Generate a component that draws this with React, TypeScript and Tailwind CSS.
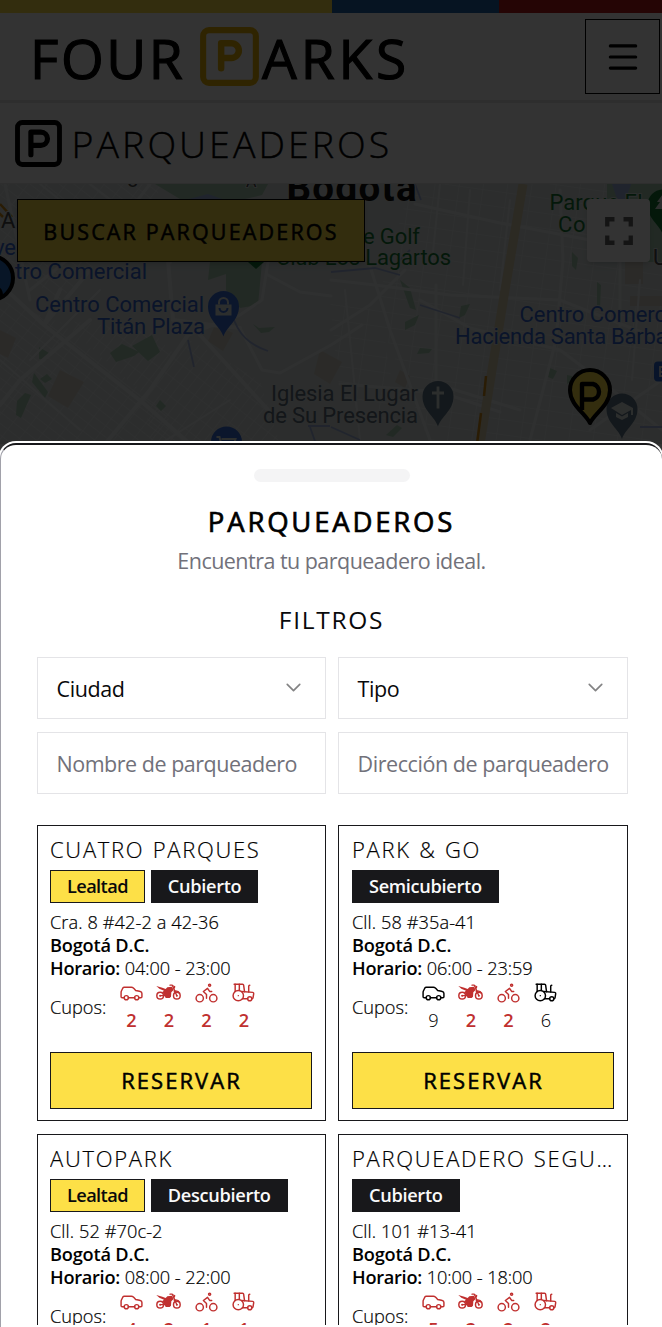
import type { ReactNode } from "react";
import { Bike, Car, ChevronDown, Menu, Tractor } from "lucide-react";

type Lot = {
  name: string;
  loyalty: boolean;
  kind: string;
  address: string;
  hours: string;
  spots: number[];
};

const LOTS: Lot[] = [
  { name: "CUATRO PARQUES", loyalty: true, kind: "Cubierto", address: "Cra. 8 #42-2 a 42-36", hours: "04:00 - 23:00", spots: [2, 2, 2, 2] },
  { name: "PARK & GO", loyalty: false, kind: "Semicubierto", address: "Cll. 58 #35a-41", hours: "06:00 - 23:59", spots: [9, 2, 2, 6] },
  { name: "AUTOPARK", loyalty: true, kind: "Descubierto", address: "Cll. 52 #70c-2", hours: "08:00 - 22:00", spots: [4, 2, 1, 1] },
  { name: "PARQUEADERO SEGU…", loyalty: false, kind: "Cubierto", address: "Cll. 101 #13-41", hours: "10:00 - 18:00", spots: [5, 3, 2, 2] },
];

function ParkingLogo({ className, d }: { className: string; d: string }) {
  return (
    <svg viewBox="0 0 60 60" className={className} fill="none" stroke="currentColor" strokeLinejoin="round" strokeLinecap="round">
      <rect x="3.2" y="3.2" width="53.6" height="53.6" rx="6" strokeWidth="6.2" />
      <path d={d} strokeWidth="6.6" />
    </svg>
  );
}

function Motorcycle() {
  return (
    <svg viewBox="0 -13 75 75" className="size-[25px]" fill="none" stroke="currentColor">
      <circle cx="12.500" cy="34" r="10" strokeWidth="4.400" />
      <circle cx="62.500" cy="34" r="10" strokeWidth="4.400" />
      <circle cx="12.500" cy="34" r="3" fill="currentColor" stroke="none" />
      <circle cx="62.500" cy="34" r="3" fill="currentColor" stroke="none" />
      <path d="M42 2.500H49L62.500 34M12.500 34H28" strokeWidth="4" strokeLinecap="round" strokeLinejoin="round" />
      <path d="M1 5L19 10L29 14L34 9L48 7L53 17L46 24L45 37L41 41H29L26 34L19 23L24 19L10 13Z" fill="currentColor" stroke="none" />
      <path d="M51 3L58 6L57 12L54 13ZM52 19Q66 14 74 27L62 22L55 25Z" fill="currentColor" stroke="none" />
    </svg>
  );
}

function Pin({ x, y, color, children }: { x: number; y: number; color: string; children: ReactNode }) {
  return (
    <g transform={`translate(${x} ${y})`}>
      <path d="M0 30C-3 20-15.500 14-15.500 0a15.500 15.500 0 1 1 31 0C15.500 14 3 20 0 30Z" fill={color} />
      {children}
    </g>
  );
}

function CityMap() {
  return (
    <svg viewBox="0 184 662 260" className="block h-[260px] w-full font-['Roboto',sans-serif]">
      <rect y="184" width="662" height="260" fill="#d9e0df" />
      <defs>
        <pattern id="blocksA" width="15" height="9" patternUnits="userSpaceOnUse" patternTransform="rotate(38)">
          <path d="M0 0H15M0 0V9" stroke="#ebeeef" strokeWidth="1.400" fill="none" />
        </pattern>
        <pattern id="blocksB" width="24" height="15" patternUnits="userSpaceOnUse" patternTransform="rotate(8)">
          <path d="M0 0H24M0 0V15" stroke="#eaeeef" strokeWidth="1.500" fill="none" />
        </pattern>
        <pattern id="blocksC" width="16" height="9" patternUnits="userSpaceOnUse" patternTransform="rotate(-52)">
          <path d="M0 0H16M0 0V9" stroke="#ebeeef" strokeWidth="1.400" fill="none" />
        </pattern>
      </defs>
      <path d="M0 300L60 322L150 398L190 442H0ZM0 184H165L120 240L60 300L0 260Z" fill="url(#blocksA)" />
      <path d="M190 340L260 380L280 444H150L145 400ZM60 320L150 330L180 360L150 400Z" fill="url(#blocksC)" />
      <path d="M410 184H662V444H430L375 310ZM330 300L380 310L400 430L340 400Z" fill="url(#blocksB)" />
      <g fill="#d8d2c7">
        <path d="M180 225h60v30h-60zM215 325l18 8-10 18-15-10zM60 370l24 12-16 26-20-12zM320 350l22 12-12 22-16-10zM0 330l16 8-8 20-8-4zM625 262h18v22h-18zM630 296h32v10h-32zM400 370l10 6-5 12-10-6z" />
      </g>
      <g fill="#a9cdb3">
        <path d="M155 184H268L262 195L245 199H180ZM607 184H662V262H607ZM210 262H262L258 305L240 308L226 290V274L208 280ZM110 353l12-9 17 8-5 4-18 6zM132 346l20-11 8 17-12 9zM39 347l10 6-2 7-8-1zM34 373l14 19-3 6-13-16zM47 374l5 5-7 4-5-4zM17 401l8-8 6 2-10 23-5-3zM160 400l6 6-5 5-5-5zM253 324l6 4 16-1-6 5-8 1zM405 322l14-7-4 10-10 5zM461 306l9-2-5 11-6 3zM420 348l12 1-3 4-12 1zM550 368l7 3-4 8-5-2zM567 375l5 1v6l-5 2zM386 435l11-10 5 3-9 9zM400 280l10 8 6 22-6-2zM572 252l6 6-2 12-4-4zM597 282l4 3-1 22-3-2z" />
      </g>
      <g fill="none" stroke="#ebeff0" strokeLinecap="round" strokeLinejoin="round">
        <path d="M0 284L44 325L142 402L190 444M44 325L90 270M0 405L20 380L90 320M44 325L60 290M105 444L150 390L188 335L212 325L240 328M200 335L270 412M168 260L173 320L212 325M150 240L170 262" strokeWidth="4" />
        <path d="M268 262L262 300L240 315L212 325M268 275L300 292L331 296M240 328L262 370L280 373L331 345L362 325M365 250L390 330L430 440M331 280L375 285L450 295L560 300L662 340M415 204L500 223L590 240M436 285V384L520 410M560 190L563 260L556 340L530 440M331 330L370 305L405 270M420 300L470 328L560 350L600 380L662 430M340 384L440 392L500 412M590 430L662 380M150 184L130 210L30 290M30 300L5 184M620 262V340" strokeWidth="3" />
        <path d="M90 184L170 245M40 184L110 240M100 290L30 360M0 360L80 430M230 400L160 444M440 184L432 262M470 190L463 285M510 200L500 290M640 280L632 380M345 290L360 440" strokeWidth="2" />
      </g>
      <path d="M523 184L505 290L480 444" fill="none" stroke="#dccfae" strokeWidth="9" />
      <path d="M486 376L484 396M481 413L477 444M0 204L12 217M-2 212L3 217" fill="none" stroke="#cf8a17" strokeWidth="2.500" />
      <g fill="none" stroke="#a3b6e0" strokeWidth="1.800">
        <path d="M232 314C238 335 250 345 268 351M188 340L194 367M415 184L421 200M410 250L395 265M331 272L375 268L400 275M420 305L460 318M640 427H662M308 426H330M310 427L316 444M331 427L360 440" />
      </g>
      <path d="M185 200L208 194L228 201L208 210ZM612 184l20-2-6 16-8 4z" fill="#9fb4e2" />

      <g fontSize="22" strokeLinejoin="round" strokeWidth="2" stroke="#dde3e2" paintOrder="stroke">
        <text x="286.500" y="201" fontSize="38.500" fontWeight="700" fill="#111111" textLength="130">Bogotá</text>
        <g fill="#3366d1">
          <text x="-6" y="255" textLength="22">ve</text>
          <text x="15" y="279" textLength="132">tro Comercial</text>
          <text x="35" y="311.500" textLength="169">Centro Comercial</text>
          <text x="97" y="333.500" textLength="108">Titán Plaza</text>
          <text x="519.500" y="322" textLength="169">Centro Comercial</text>
          <text x="455" y="344" textLength="231">Hacienda Santa Bárbara</text>
        </g>
        <g fill="#167a36">
          <text x="363" y="244" textLength="57">e Golf</text>
          <text x="276" y="265" textLength="175">Club Los Lagartos</text>
          <text x="549.500" y="210" textLength="93">Parque El</text>
          <text x="558" y="232" textLength="80">Country</text>
        </g>
        <g fill="#5f6f7c">
          <text x="271" y="401" textLength="147">Iglesia El Lugar</text>
          <text x="263" y="423" textLength="155">de Su Presencia</text>
        </g>
        <g fill="#4a4a4a">
          <text x="1" y="228">A</text>
          <text x="653" y="265">U</text>
          <text x="127" y="187" fontSize="20">o</text>
          <text x="246" y="187" fontSize="16">A</text>
        </g>
      </g>

      <Pin x={223.500} y={306.500} color="#3a6fdc">
        <path d="M-8-2H8V9H-8Z" fill="#dde3e2" />
        <path d="M-4.500-2V-4a4.500 4.500 0 0 1 9 0V-2" fill="none" stroke="#dde3e2" strokeWidth="2" />
        <path d="M-4 1.500a4 4 0 0 0 8 0" fill="none" stroke="#3a6fdc" strokeWidth="2" />
      </Pin>
      <Pin x={438} y={396.500} color="#61788a">
        <path d="M0-10V12M-6-3.500H6" stroke="#dde3e2" strokeWidth="2.800" />
      </Pin>
      <Pin x={622} y={409} color="#61788a">
        <path d="M-11-1L0-7L11-1V6H9V1L0 6Z" fill="#dde3e2" />
        <path d="M-6 4V8L0 11L6 8V4L0 7.500Z" fill="#dde3e2" />
      </Pin>
      <Pin x={226.500} y={442} color="#3a6fdc">
        <path d="M-10-5H-7L-5 3H7L9-3H-5" stroke="#dde3e2" strokeWidth="2" fill="none" />
      </Pin>
      <Pin x={663} y={205} color="#167a36">
        <path d="M0-11L-6-3H-3L-8 4H8V-11Z" fill="#dde3e2" />
      </Pin>
      <path d="M248 262H264L256 269Z" fill="#167a36" />
      <rect x="654" y="361.500" width="20" height="20" rx="4" fill="#2c66cf" />
      <path d="M660 367H670V376H660ZM660 372H670" fill="none" stroke="#dde3e2" strokeWidth="1.800" />

      <path d="M590 423C585 413 570 405 570 390a20 20 0 1 1 40 0C610 405 595 413 590 423Z" fill="#fde047" stroke="#000" strokeWidth="4" strokeLinejoin="round" />
      <path d="M582 410V384H593a8 8 0 0 1 0 15.500H582" fill="none" stroke="#000" strokeWidth="4.400" strokeLinejoin="round" />
      <circle cx="-9" cy="278" r="22" fill="#2870c4" stroke="#000" strokeWidth="4" />
      <path d="M-8 300V286Q3 285 3 296L-2 301Z" fill="#000" />
    </svg>
  );
}

function Field({ label, select = false }: { label: string; select?: boolean }) {
  if (select) {
    return (
      <button className="flex h-[62px] items-center justify-between border border-[#e4e4e7] px-[18.500px] pt-[3px] text-[21.500px] tracking-[-0.400px] text-[#09090b]">
        <span>{label}</span>
        <ChevronDown className="mr-px -mt-1 size-[25px] opacity-50" strokeWidth={1.600} />
      </button>
    );
  }
  return (
    <div className="flex h-[62px] items-center whitespace-nowrap border border-[#e4e4e7] px-[18.500px] pt-[3px] text-[21.500px] tracking-[-0.480px] text-[#71717a] even:tracking-[-0.430px]">
      {label}
    </div>
  );
}

function Spots({ spots }: { spots: number[] }) {
  const icons = [
    <Car className="size-[25px]" strokeWidth={1.400} />,
    <Motorcycle />,
    <Bike className="size-[25px]" strokeWidth={1.400} />,
    <Tractor className="size-[25px]" strokeWidth={1.400} />,
  ];
  return (
    <div className="flex gap-[12.500px] pl-[12.500px]">
      {spots.map((n, i) => (
        <div key={i} className={n > 5 ? "flex w-[25px] flex-col items-center font-light text-black" : "flex w-[25px] flex-col items-center font-semibold text-[#c0302f]"}>
          {icons[i]}
          <span className="leading-[30px]">{n}</span>
        </div>
      ))}
    </div>
  );
}

function LotCard({ lot }: { lot: Lot }) {
  return (
    <article className="flex h-[296px] flex-col border border-[#18181b] pl-3 pr-[13px] pt-[8px] even:pl-[13px]">
      <h3 className="h-[36px] overflow-hidden whitespace-nowrap text-[22px] font-light leading-[31px] tracking-[1.700px] [-webkit-text-stroke:0.200px_#000] [word-spacing:1px]">{lot.name}</h3>
      <div className="flex h-[33px] gap-1.5 text-[18.200px] font-semibold leading-[33px] tracking-[-0.320px]">
        {lot.loyalty && <span className="flex h-[33px] items-center border border-[#18181b] bg-[#fde047] px-4 tracking-[-0.600px] text-[#09090b]">Lealtad</span>}
        <span className="flex h-[33px] items-center bg-[#18181b] px-[17px] text-[#fafafa]">{lot.kind}</span>
      </div>
      <div className="mt-[8px] text-[18.200px] leading-[23.200px]">
        <p className="font-light tracking-[0.080px] [-webkit-text-stroke:0.200px_#000]">{lot.address}</p>
        <p className="font-semibold tracking-[-0.200px]">Bogotá D.C.</p>
        <p className="font-light">
          <span className="font-semibold tracking-[-0.280px]">Horario:</span> <span className="tracking-[-0.080px] [-webkit-text-stroke:0.200px_#000]">{lot.hours}</span>
        </p>
        <div className="-mt-px flex items-center">
          <span className="font-light [-webkit-text-stroke:0.200px_#000]">Cupos:</span>
          <Spots spots={lot.spots} />
        </div>
      </div>
      <button className="mt-[17px] h-[57px] w-full border border-[#18181b] bg-[#fde047] pl-px text-[22px] leading-[54px] tracking-[2.050px] [-webkit-text-stroke:0.500px_#000]">RESERVAR</button>
    </article>
  );
}

export default function App() {
  return (
    <div className="relative h-[1327px] w-full overflow-hidden bg-white font-['Open_Sans','Noto_Sans',sans-serif] text-black">
      <div className="flex h-[13px]">
        <div className="w-[332px] bg-[#fde047]" />
        <div className="w-[167px] bg-[#1e64a8]" />
        <div className="flex-1 bg-[#b91c1c]" />
      </div>
      <header className="flex h-[90px] items-center justify-between border-b-[3px] border-[#e4e4e7] pl-[30px] pr-0.5">
        <div className="flex items-center text-[55px] leading-[80px] [-webkit-text-stroke:1.200px_#000]">
          <span className="w-[170px] pt-0.5 tracking-[2.500px]">FOUR</span>
          <ParkingLogo className="size-[59px] text-[#eab308]" d="M21.500 42V16.500H32a7.500 7.500 0 0 1 0 15H21.500" />
          <span className="pl-[3px] pt-0.5 tracking-[3.900px]">ARKS</span>
        </div>
        <button className="flex size-[75px] items-center justify-center border border-black">
          <Menu className="size-[38px]" />
        </button>
      </header>
      <div className="flex h-[81px] items-center border-b border-[#e4e4e7] pl-[15px]">
        <ParkingLogo className="size-[47px]" d="M20.300 44.400V15.400H33a8.450 8.450 0 0 1 0 16.900H20.300" />
        <h1 className="pl-[9.500px] pt-0.5 text-[37.500px] font-light tracking-[3.050px] [-webkit-text-stroke:0.400px_#000]">PARQUEADEROS</h1>
      </div>
      <main className="relative">
        <CityMap />
        <button className="absolute left-[17px] top-[15px] h-[63px] w-[348px] border border-black bg-[#fde047] pt-[3px] text-[21.500px] tracking-[2.150px] shadow-md [-webkit-text-stroke:0.500px_#000]">
          BUSCAR PARQUEADEROS
        </button>
        <div className="absolute right-3 top-[15px] flex size-[63px] items-center justify-center rounded-sm bg-white shadow-md">
          <svg viewBox="0 0 28 28" className="size-7" fill="none" stroke="#666" strokeWidth="4.300">
            <path d="M2.250 9.500V2.250H9.500M18.500 2.250H25.750V9.500M25.750 18.500V25.750H18.500M9.500 25.750H2.250V18.500" />
          </svg>
        </div>
      </main>

      <div className="absolute inset-0 bg-black/80" />

      <section className="absolute inset-x-0 bottom-0 top-[443px] flex flex-col rounded-t-[16px] border-l border-t-2 border-l-[#a1a1aa] border-t-[#18181b] bg-white px-9 shadow-[0_0_0_2px_#fff]">
        <div className="mx-auto mt-6 h-[13px] w-[156px] shrink-0 rounded-full bg-[#f4f4f5]" />
        <h2 className="mt-5 text-center text-[27.500px] leading-[39px] tracking-[2.800px] [-webkit-text-stroke:0.700px_#000]">PARQUEADEROS</h2>
        <p className="mt-[3px] text-center text-[21.500px] leading-[34px] tracking-[-0.530px] text-[#71717a]">Encuentra tu parqueadero ideal.</p>
        <h3 className="mt-[23px] text-center text-[24.500px] leading-[38px] tracking-[1.700px] text-[#09090b]">FILTROS</h3>
        <div className="mt-[18px] grid w-[591px] shrink-0 grid-cols-[289px_290px] gap-x-3 gap-y-[13px]">
          <Field label="Ciudad" select />
          <Field label="Tipo" select />
          <Field label="Nombre de parqueadero" />
          <Field label="Dirección de parqueadero" />
        </div>
        <div className="mb-0.5 mt-[31px] grid w-[591px] flex-1 grid-cols-[289px_290px] content-start gap-x-3 gap-y-[13px] overflow-hidden">
          {LOTS.map((lot) => (
            <LotCard key={lot.name} lot={lot} />
          ))}
        </div>
      </section>
    </div>
  );
}
